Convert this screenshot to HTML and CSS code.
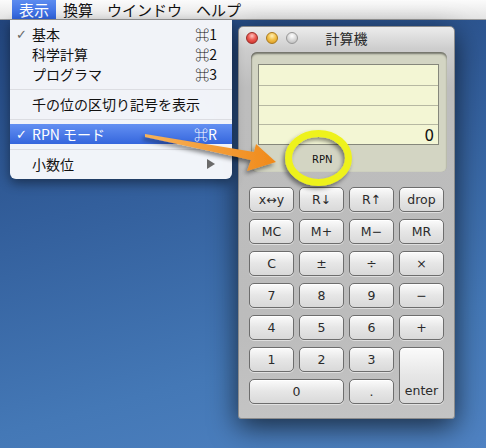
FILE: index.html
```html
<!DOCTYPE html>
<html lang="ja">
<head>
    <meta charset="UTF-8">
    <title>計算機 - RPN モード</title>
    <link rel="stylesheet" href="styles.css">
</head>
<body>
    <div class="menubar">
        <span class="mb-item active">表示</span>
        <span class="mb-item">換算</span>
        <span class="mb-item">ウインドウ</span>
        <span class="mb-item">ヘルプ</span>
    </div>

    <div class="desktop">
        <div class="dropdown">
            <div class="item"><span class="check">✓</span>基本<span class="key">⌘1</span></div>
            <div class="item"><span class="check"></span>科学計算<span class="key">⌘2</span></div>
            <div class="item"><span class="check"></span>プログラマ<span class="key">⌘3</span></div>
            <div class="sep"></div>
            <div class="item"><span class="check"></span>千の位の区切り記号を表示</div>
            <div class="sep"></div>
            <div class="item selected"><span class="check">✓</span>RPN モード<span class="key">⌘R</span></div>
            <div class="sep"></div>
            <div class="item"><span class="check"></span>小数位<span class="submenu"></span></div>
        </div>

        <div class="calc">
            <div class="titlebar">
                <div class="lights">
                    <span class="light red"></span>
                    <span class="light yellow"></span>
                    <span class="light gray"></span>
                </div>
                <div class="title">計算機</div>
                <div></div>
            </div>

            <div class="display">
                <div class="lcd">
                    <div class="row"></div>
                    <div class="row"></div>
                    <div class="row"></div>
                    <div class="row">0</div>
                </div>
                <div class="mode">RPN</div>
            </div>

            <div class="keys">
                <button class="key-btn">x↔y</button>
                <button class="key-btn">R↓</button>
                <button class="key-btn">R↑</button>
                <button class="key-btn">drop</button>

                <button class="key-btn">MC</button>
                <button class="key-btn">M+</button>
                <button class="key-btn">M−</button>
                <button class="key-btn">MR</button>

                <button class="key-btn">C</button>
                <button class="key-btn">±</button>
                <button class="key-btn">÷</button>
                <button class="key-btn">×</button>

                <button class="key-btn">7</button>
                <button class="key-btn">8</button>
                <button class="key-btn">9</button>
                <button class="key-btn">−</button>

                <button class="key-btn">4</button>
                <button class="key-btn">5</button>
                <button class="key-btn">6</button>
                <button class="key-btn">+</button>

                <button class="key-btn">1</button>
                <button class="key-btn">2</button>
                <button class="key-btn">3</button>
                <button class="key-btn enter">enter</button>

                <button class="key-btn zero">0</button>
                <button class="key-btn">.</button>
            </div>
        </div>
    </div>

    <svg class="annot" width="486" height="448" viewBox="0 0 486 448">
        <defs>
            <linearGradient id="arrowFill" x1="0" y1="0" x2="1" y2="0">
                <stop offset="0" stop-color="#f7b25a"/>
                <stop offset="1" stop-color="#f08a1a"/>
            </linearGradient>
            <filter id="soft" x="-20%" y="-20%" width="140%" height="140%">
                <feDropShadow dx="-2" dy="3" stdDeviation="2" flood-color="#000" flood-opacity="0.45"/>
            </filter>
        </defs>
        <polygon points="145,134 254,152 256,144 276,162 247,171 251,160 145,137" fill="url(#arrowFill)" filter="url(#soft)"/>
        <ellipse cx="318.5" cy="158" rx="30" ry="24.5" fill="none" stroke="#eef21c" stroke-width="7" filter="url(#soft)"/>
    </svg>
</body>
</html>
```

FILE: styles.css
```css
body {
    margin: 0;
    width: 486px;
    height: 448px;
    overflow: hidden;
    position: relative;
    font-family: "Noto Sans CJK JP", "DejaVu Sans", sans-serif;
    background: linear-gradient(165deg, #21437a 0%, #335f9c 40%, #4478b6 75%, #4f82c2 100%);
}
.menubar {
    height: 20px;
    display: flex;
    align-items: stretch;
    padding-left: 12px;
    background: linear-gradient(#fbfbfb, #e4e4e4);
    border-bottom: 1px solid #9a9a9a;
    box-sizing: border-box;
    font-size: 15px;
    color: #111;
}
.mb-item {
    display: flex;
    align-items: center;
    padding: 0 7px;
}
.mb-item.active {
    background: linear-gradient(#5c8cf0, #2f62dc);
    color: #fff;
}
.desktop {
    position: relative;
    height: 428px;
}
.dropdown {
    position: absolute;
    left: 10px;
    top: 0;
    width: 222px;
    padding: 4px 0 5px;
    background: rgba(248, 249, 252, 0.97);
    border-radius: 0 0 6px 6px;
    box-shadow: 0 4px 12px rgba(0, 0, 0, 0.45);
    font-size: 14px;
    color: #111;
    z-index: 2;
}
.item {
    height: 20px;
    display: flex;
    align-items: center;
    padding: 0 15px 0 6px;
}
.item.selected {
    background: linear-gradient(#6390f2, #3566dd);
    color: #fff;
}
.check {
    width: 16px;
    font-family: "DejaVu Sans", sans-serif;
    font-size: 13px;
    font-weight: bold;
    color: #666;
}
.item.selected .check {
    color: #fff;
}
.key {
    margin-left: auto;
    font-family: "Noto Sans CJK JP", "DejaVu Sans", sans-serif;
}
.submenu {
    margin-left: auto;
    margin-right: 2px;
    width: 0;
    height: 0;
    border-left: 8px solid #6a6a6a;
    border-top: 5px solid transparent;
    border-bottom: 5px solid transparent;
}
.sep {
    height: 10px;
    position: relative;
}
.sep::after {
    content: "";
    position: absolute;
    left: 0;
    right: 0;
    top: 5px;
    border-top: 1px solid #dcdde2;
}
.calc {
    position: absolute;
    left: 238px;
    top: 6px;
    width: 217px;
    height: 393px;
    box-sizing: border-box;
    border-radius: 5px 5px 3px 3px;
    background: linear-gradient(#ececec 0, #cdcdcd 22px, #bdbdbd 60px, #bcbcbc 300px, #c4c4c4 100%);
    border: 1px solid #8c8c8c;
    box-shadow: 0 8px 28px rgba(0, 0, 0, 0.65);
    z-index: 1;
}
.titlebar {
    height: 21px;
    display: grid;
    grid-template-columns: 1fr auto 1fr;
    align-items: center;
}
.lights {
    display: flex;
    gap: 8px;
    padding-left: 7px;
}
.light {
    width: 12px;
    height: 12px;
    border-radius: 50%;
    box-sizing: border-box;
}
.light.red {
    background: radial-gradient(circle at 50% 30%, #ffc4c0 0, #ec5a52 45%, #c42a24 100%);
    border: 1px solid #9a2b26;
}
.light.yellow {
    background: radial-gradient(circle at 50% 30%, #fff0b8 0, #f2c14a 45%, #d8941a 100%);
    border: 1px solid #a97a1d;
}
.light.gray {
    background: radial-gradient(circle at 50% 30%, #ffffff 0, #dcdcdc 45%, #b4b4b4 100%);
    border: 1px solid #979797;
}
.title {
    font-size: 14px;
    color: #2a2a2a;
}
.display {
    margin: 4px 0 0 12px;
    width: 196px;
    height: 120px;
    box-sizing: border-box;
    border-radius: 6px;
    background: #d3d5c3;
    box-shadow: inset 0 2px 2px rgba(0, 0, 0, 0.45), inset 1px 0 1px rgba(0, 0, 0, 0.2);
    padding: 12px 8px 0 7px;
}
.lcd {
    height: 81px;
    box-sizing: border-box;
    border: 1px solid #85877b;
    background: #f3f6d4;
    display: grid;
    grid-template-rows: 21px 20px 19px 1fr;
}
.row {
    border-bottom: 1px solid #b6b8a2;
    font-family: "DejaVu Sans", sans-serif;
    font-size: 15px;
    text-align: right;
    padding-right: 4px;
    color: #111;
    line-height: 22px;
}
.row:last-child {
    border-bottom: none;
}
.mode {
    margin: 9px 0 0 54px;
    font-family: "DejaVu Sans", sans-serif;
    font-size: 10px;
    color: #111;
}
.keys {
    margin: 15px 0 0 10px;
    display: grid;
    grid-template-columns: repeat(4, 45px);
    grid-auto-rows: 25px;
    column-gap: 5px;
    row-gap: 7px;
}
.key-btn {
    margin: 0;
    padding: 0;
    border: 1px solid #6d6d6d;
    border-radius: 5px;
    background: linear-gradient(#fbfbfb, #e6e6e6 50%, #d9d9d9);
    box-shadow: inset 0 1px 0 #fff, 0 1px 0 rgba(255, 255, 255, 0.5);
    font-family: "DejaVu Sans", sans-serif;
    font-size: 12.5px;
    color: #2b2b2b;
}
.key-btn.enter {
    grid-row: span 2;
    display: flex;
    align-items: flex-end;
    justify-content: center;
    padding-bottom: 5px;
}
.key-btn.zero {
    grid-column: span 2;
}
.annot {
    position: absolute;
    left: 0;
    top: 0;
    z-index: 5;
    pointer-events: none;
}
```
